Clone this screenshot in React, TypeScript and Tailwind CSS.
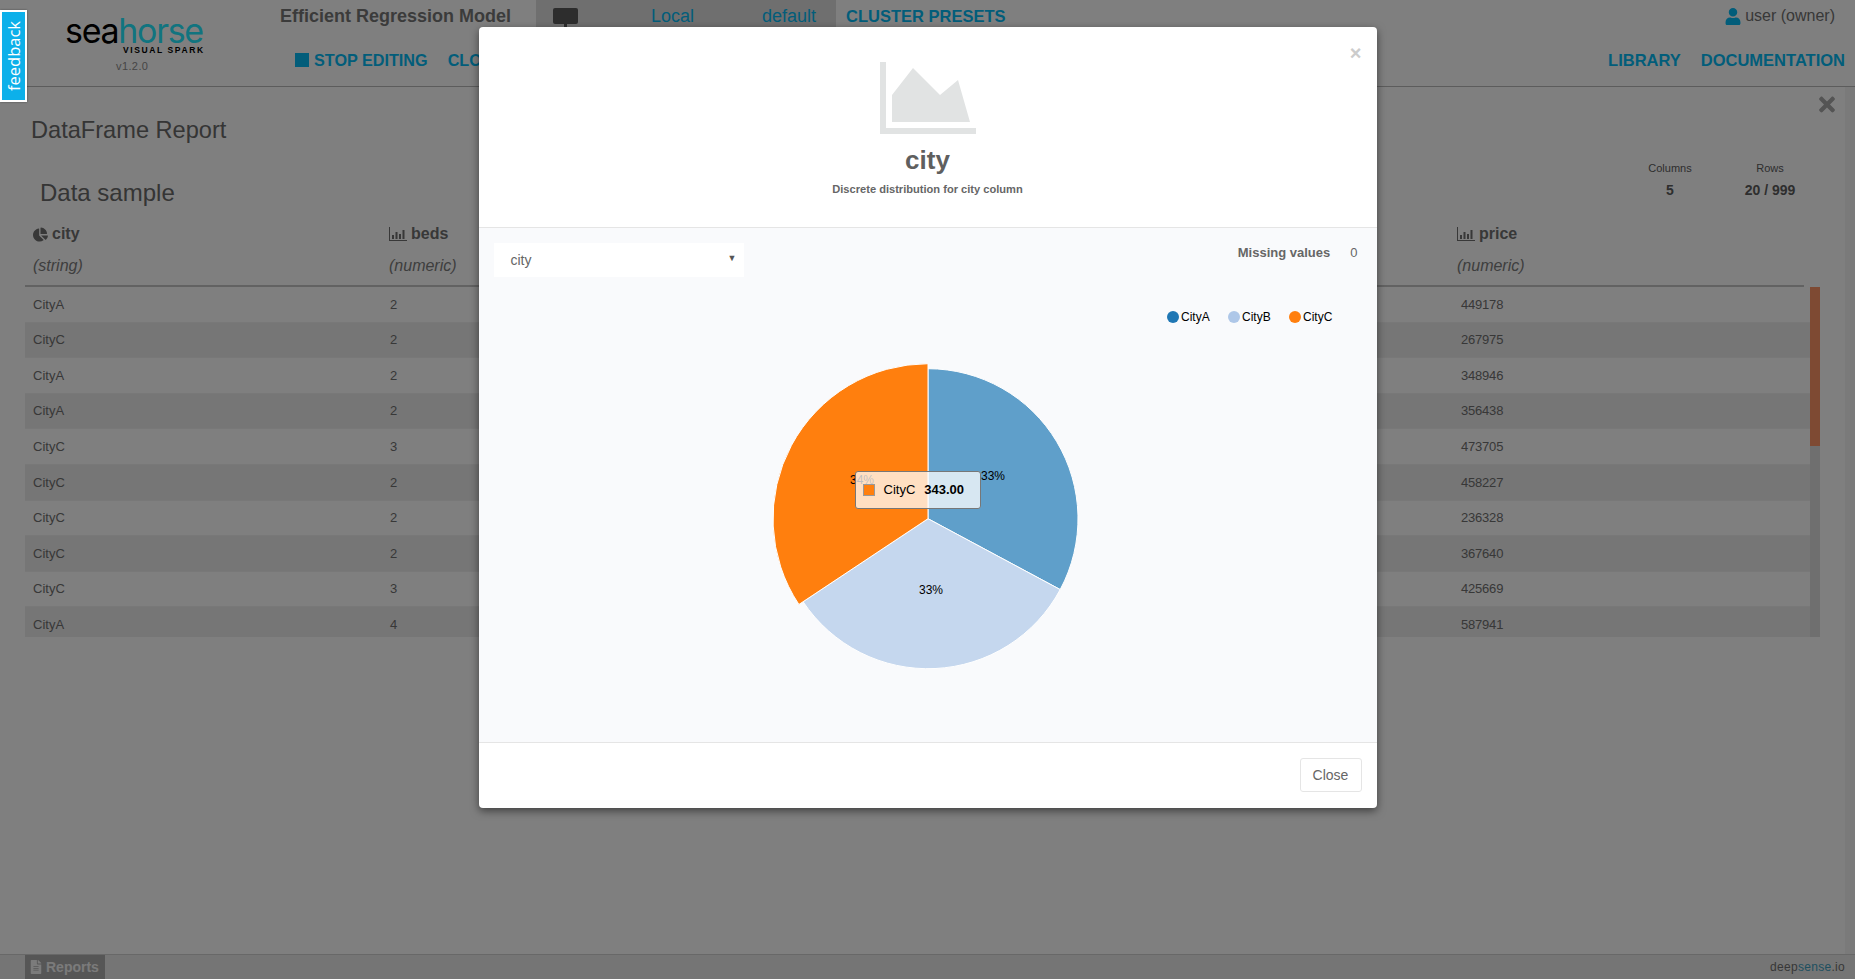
import React from "react";
import { FaChartPie, FaUser, FaTimes, FaFileAlt } from "react-icons/fa";

const rows = [
  ["CityA", "2", "1", "1180", "449178"],
  ["CityC", "2", "2", "1120", "267975"],
  ["CityA", "2", "1", "1240", "348946"],
  ["CityA", "2", "2", "1310", "356438"],
  ["CityC", "3", "2", "1560", "473705"],
  ["CityC", "2", "1", "1490", "458227"],
  ["CityC", "2", "1", "990", "236328"],
  ["CityC", "2", "2", "1270", "367640"],
  ["CityC", "3", "2", "1410", "425669"],
  ["CityA", "4", "3", "2040", "587941"],
];

const headers = [
  ["city", "(string)", "pie"],
  ["beds", "(numeric)", "bar"],
  ["baths", "(numeric)", "bar"],
  ["sq_ft", "(numeric)", "bar"],
  ["price", "(numeric)", "bar"],
];

function BarIcon() {
  return (
    <svg width="18" height="14" viewBox="0 0 18 14" className="shrink-0 fill-current">
      <path d="M0 0h1v13h17v1H0z" />
      <path d="M3 8h2v4H3zM6.500 5h2v7h-2zM10 7h2v5h-2zM13.500 3h2v9h-2z" />
    </svg>
  );
}

function polar(r: number, deg: number, cx = 449, cy = 228.700) {
  const a = (deg * Math.PI) / 180;
  return [cx + r * Math.sin(a), cy - r * Math.cos(a)];
}

function slice(r: number, from: number, to: number) {
  const [x1, y1] = polar(r, from);
  const [x2, y2] = polar(r, to);
  return `M449 228.700L${x1} ${y1}A${r} ${r} 0 ${to - from > 180 ? 1 : 0} 1 ${x2} ${y2}Z`;
}

function PieChart() {
  return (
    <svg width="898" height="452" className="block" style={{ fontFamily: '"Liberation Sans", Arial, sans-serif' }}>
      <g stroke="#ffffff" strokeWidth="1">
        <path d={slice(150, 0, 118.200)} fill="#5f9fca" />
        <path d={slice(150, 118.200, 236.400)} fill="#c5d7ee" />
        <path d={slice(155, 236.400, 360)} fill="#ff7f0e" />
      </g>
      <g fontSize="12" fill="#000000" textAnchor="middle">
        <text x="514" y="190">33%</text>
        <text x="452" y="304">33%</text>
        <text x="383" y="194">34%</text>
      </g>
      <g fontSize="12" fill="#000000">
        <circle cx="694" cy="27" r="6" fill="#1f77b4" />
        <text x="702" y="31">CityA</text>
        <circle cx="755" cy="27" r="6" fill="#aec7e8" />
        <text x="763" y="31">CityB</text>
        <circle cx="816" cy="27" r="6" fill="#ff7f0e" />
        <text x="824" y="31">CityC</text>
      </g>
    </svg>
  );
}

export default function App() {
  return (
    <div className="relative h-[979px] w-[1855px] overflow-hidden bg-white font-['Liberation_Sans',Arial,sans-serif] text-[#707070]">
      <div className="flex h-full flex-col">
        {/* top bar */}
        <header className="flex h-[87px] shrink-0 border-b border-[#b8b8b8] bg-white">
          <div className="flex w-[280px] shrink-0 flex-col pl-[65px] pt-[16px]">
            <div className="font-['Inter',sans-serif] text-[34px] leading-[30px] font-normal tracking-[-1.300px] whitespace-nowrap text-black">
              sea<span className="text-[#22e8ff]">horse</span>
            </div>
            <div className="ml-[58px] text-[8.500px] leading-[8px] font-bold tracking-[1.600px] whitespace-nowrap text-black">VISUAL SPARK</div>
            <div className="ml-[51px] mt-[6px] text-[11px] leading-[12px] tracking-[0.400px] text-[#8c8c8c]">v1.2.0</div>
          </div>
          <div className="flex flex-1 flex-col pr-[10px]">
            <div className="flex h-[35px] items-start">
              <div className="mt-[5px] w-[256px] text-[18px] leading-[22px] font-bold text-[#777777]">Efficient Regression Model</div>
              <div className="flex h-[35px] w-[300px] bg-[#dedede] text-[18px] leading-[22px] text-[#04baf4]">
                <svg width="26" height="30" viewBox="0 0 26 30" className="ml-[17px] mt-[8px] shrink-0 fill-[#5a5a5a]">
                  <rect x="0" y="0" width="25" height="16" rx="2" />
                  <path d="M11 16h3v3h4v1H7v-1h4z" />
                </svg>
                <span className="ml-[72px] mt-[5px] w-[111px] shrink-0">Local</span>
                <span className="mt-[5px]">default</span>
              </div>
              <div className="ml-[10px] mt-[5px] text-[16.500px] leading-[22px] font-bold text-[#04baf4]">CLUSTER PRESETS</div>
              <div className="ml-auto mt-[5px] flex items-center pr-[10px] text-[16px] leading-[22px] text-[#707070]">
                <FaUser className="mr-[4px] h-[17px] w-[16px] text-[#04baf4]" />
                user (owner)
              </div>
            </div>
            <div className="mt-[14px] flex items-center text-[16px] leading-[22px] font-bold text-[#04baf4]">
              <span className="ml-[15px] mr-[5px] h-[14px] w-[14px] bg-[#04baf4]" />
              <span className="text-[16.200px]">STOP EDITING</span>
              <span className="ml-[20px] text-[16.200px]">CLOSE</span>
              <span className="ml-auto text-[16.500px]">LIBRARY</span>
              <span className="ml-[20px] text-[16.500px]">DOCUMENTATION</span>
            </div>
          </div>
        </header>

        {/* main */}
        <div className="flex min-h-0 flex-1">
          <main className="relative min-w-0 flex-1">
            <div className="flex h-[59px] items-start justify-between">
              <h1 className="ml-[31px] mt-[27px] text-[23.600px] leading-[32px] font-normal text-[#6a6a6a]">DataFrame Report</h1>
              <FaTimes className="mr-[10.500px] mt-[6px] h-[23px] w-[16px] text-[#a8a8a8]" />
            </div>
            <div className="flex items-start justify-between">
              <h2 className="ml-[40px] mt-[32px] text-[24px] leading-[30px] font-normal text-[#6a6a6a]">Data sample</h2>
              <div className="mr-[25px] mt-[15px] flex text-center text-[#5c5c5c]">
                <div className="w-[100px]">
                  <div className="text-[11px] leading-[14px]">Columns</div>
                  <div className="mt-[7px] text-[14px] leading-[16px] font-bold">5</div>
                </div>
                <div className="w-[100px]">
                  <div className="text-[11px] leading-[14px]">Rows</div>
                  <div className="mt-[7px] text-[14px] leading-[16px] font-bold">20 / 999</div>
                </div>
              </div>
            </div>

            <div className="ml-[25px] mt-[6px] w-[1795px]">
              <div className="mr-[16px] border-b-2 border-[#c4c4c4]">
                <div className="flex h-[40px] items-center pl-[8px] text-[16px] font-bold text-[#707070]">
                  {headers.map(([name, , kind]) => (
                    <div key={name} className="flex w-[356px] shrink-0 items-center gap-[4px]">
                      {kind === "pie" ? <FaChartPie className="h-[15px] w-[15px]" /> : <BarIcon />}
                      {name}
                    </div>
                  ))}
                </div>
                <div className="flex h-[31px] pl-[8px] text-[16px] leading-[24px] text-[#7c7c7c] italic">
                  {headers.map(([name, type]) => (
                    <div key={name} className="w-[356px] shrink-0">{type}</div>
                  ))}
                </div>
              </div>
              <div className="flex h-[350px] overflow-hidden">
                <div className="min-w-0 flex-1">
                  {rows.map((r, i) => (
                    <div
                      key={i}
                      className={`flex h-[35.600px] items-center border-b border-[#f0f0f0] pl-[8px] text-[13px] text-[#707070] ${i % 2 === 1 ? "bg-[#ececec]" : "bg-white"}`}
                    >
                      {r.map((v, j) => (
                        <div key={j} className={`w-[357px] shrink-0 ${j === 4 ? "tracking-[-0.200px]" : ""}`}>{v}</div>
                      ))}
                    </div>
                  ))}
                </div>
                <div className="w-[10px] shrink-0 bg-[#dedede]">
                  <div className="h-[159px] bg-[#fd9566]" />
                </div>
              </div>
            </div>
          </main>
          <div className="w-[10px] shrink-0 bg-[#f5f5f5]" />
        </div>

        {/* footer */}
        <footer className="flex h-[25px] shrink-0 items-stretch justify-between border-t border-[#d0d0d0] bg-[#ebebeb]">
          <div className="ml-[25px] flex w-[80px] items-center gap-[4px] bg-[#acacac] pl-[5px] text-[14px] font-bold text-[#f6f6f6]">
            <FaFileAlt className="h-[14px] w-[12px]" />
            Reports
          </div>
          <div className="pr-[10px] text-[12px] leading-[24px] tracking-[0.300px] text-[#707070]">
            deep<span className="text-[#40a0c0]">sense</span>.io
          </div>
        </footer>
      </div>

      {/* modal layer */}
      <div className="absolute inset-0 flex justify-center bg-black/50">
        <div className="mt-[27px] flex h-[781px] w-[898px] flex-col overflow-hidden rounded-[4px] bg-white shadow-[0_3px_9px_rgba(0,0,0,0.5)]">
          <div className="relative h-[201px] shrink-0 border-b border-[#e5e5e5] pt-[35px] text-center">
            <span className="absolute right-[15px] top-[14px] text-[20px] leading-[24px] font-bold text-[#cccccc]">×</span>
            <svg width="96" height="72" viewBox="0 0 96 72" className="mx-auto block fill-[#e1e3e3]">
              <path d="M0 0h6v66h90v6H0z" />
              <path d="M12 60V33L33 6 60 33 78 18 90 60z" />
            </svg>
            <div className="mt-[11px] text-[26px] leading-[30px] font-bold text-[#5f5f5f]">city</div>
            <div className="mt-[7px] text-[11.100px] leading-[14px] font-bold text-[#666666]">Discrete distribution for city column</div>
          </div>
          <div className="relative min-h-0 flex-1 border-b border-[#e5e5e5] bg-[#f9fafc]">
            <div className="flex h-[62px] items-start justify-between">
              <div className="relative ml-[15px] mt-[15px] flex h-[34px] w-[250px] items-center bg-white pl-[17px] text-[14px] text-[#666666]">
                city
                <span className="absolute right-[7px] top-[9px] text-[9px] leading-[12px] text-[#555555]">▼</span>
              </div>
              <div className="mr-[19px] mt-[17px] flex text-[13px] leading-[16px] text-[#666666]">
                <span className="font-bold">Missing values</span>
                <span className="ml-[20px]">0</span>
              </div>
            </div>
            <PieChart />
            <div className="absolute left-[376px] top-[243px] flex h-[38px] w-[126px] items-center rounded-[3px] border border-[#777777] bg-white/75 pl-[7px] text-[13px] text-black">
              <span className="h-[12px] w-[12px] border border-[#999999] bg-[#ff7f0e]" />
              <span className="ml-[9px]">CityC</span>
              <span className="ml-[9px] font-bold">343.00</span>
            </div>
          </div>
          <div className="flex h-[65px] shrink-0 items-start justify-end pr-[15px] pt-[15px]">
            <div className="flex h-[34px] w-[62px] items-center justify-center rounded-[3px] border border-[#e5e5e5] text-[14px] text-[#666666]">Close</div>
          </div>
        </div>
      </div>

      {/* feedback tab */}
      <div className="absolute left-0 top-[10px] flex h-[92px] w-[27px] items-center justify-center border-2 border-white bg-[#0cb0ea] shadow-[0_0_2px_rgba(0,0,0,0.4)]">
        <span className="-rotate-90 text-[16.500px] leading-[20px] whitespace-nowrap text-white font-['Open_Sans',sans-serif]">feedback</span>
      </div>
    </div>
  );
}
